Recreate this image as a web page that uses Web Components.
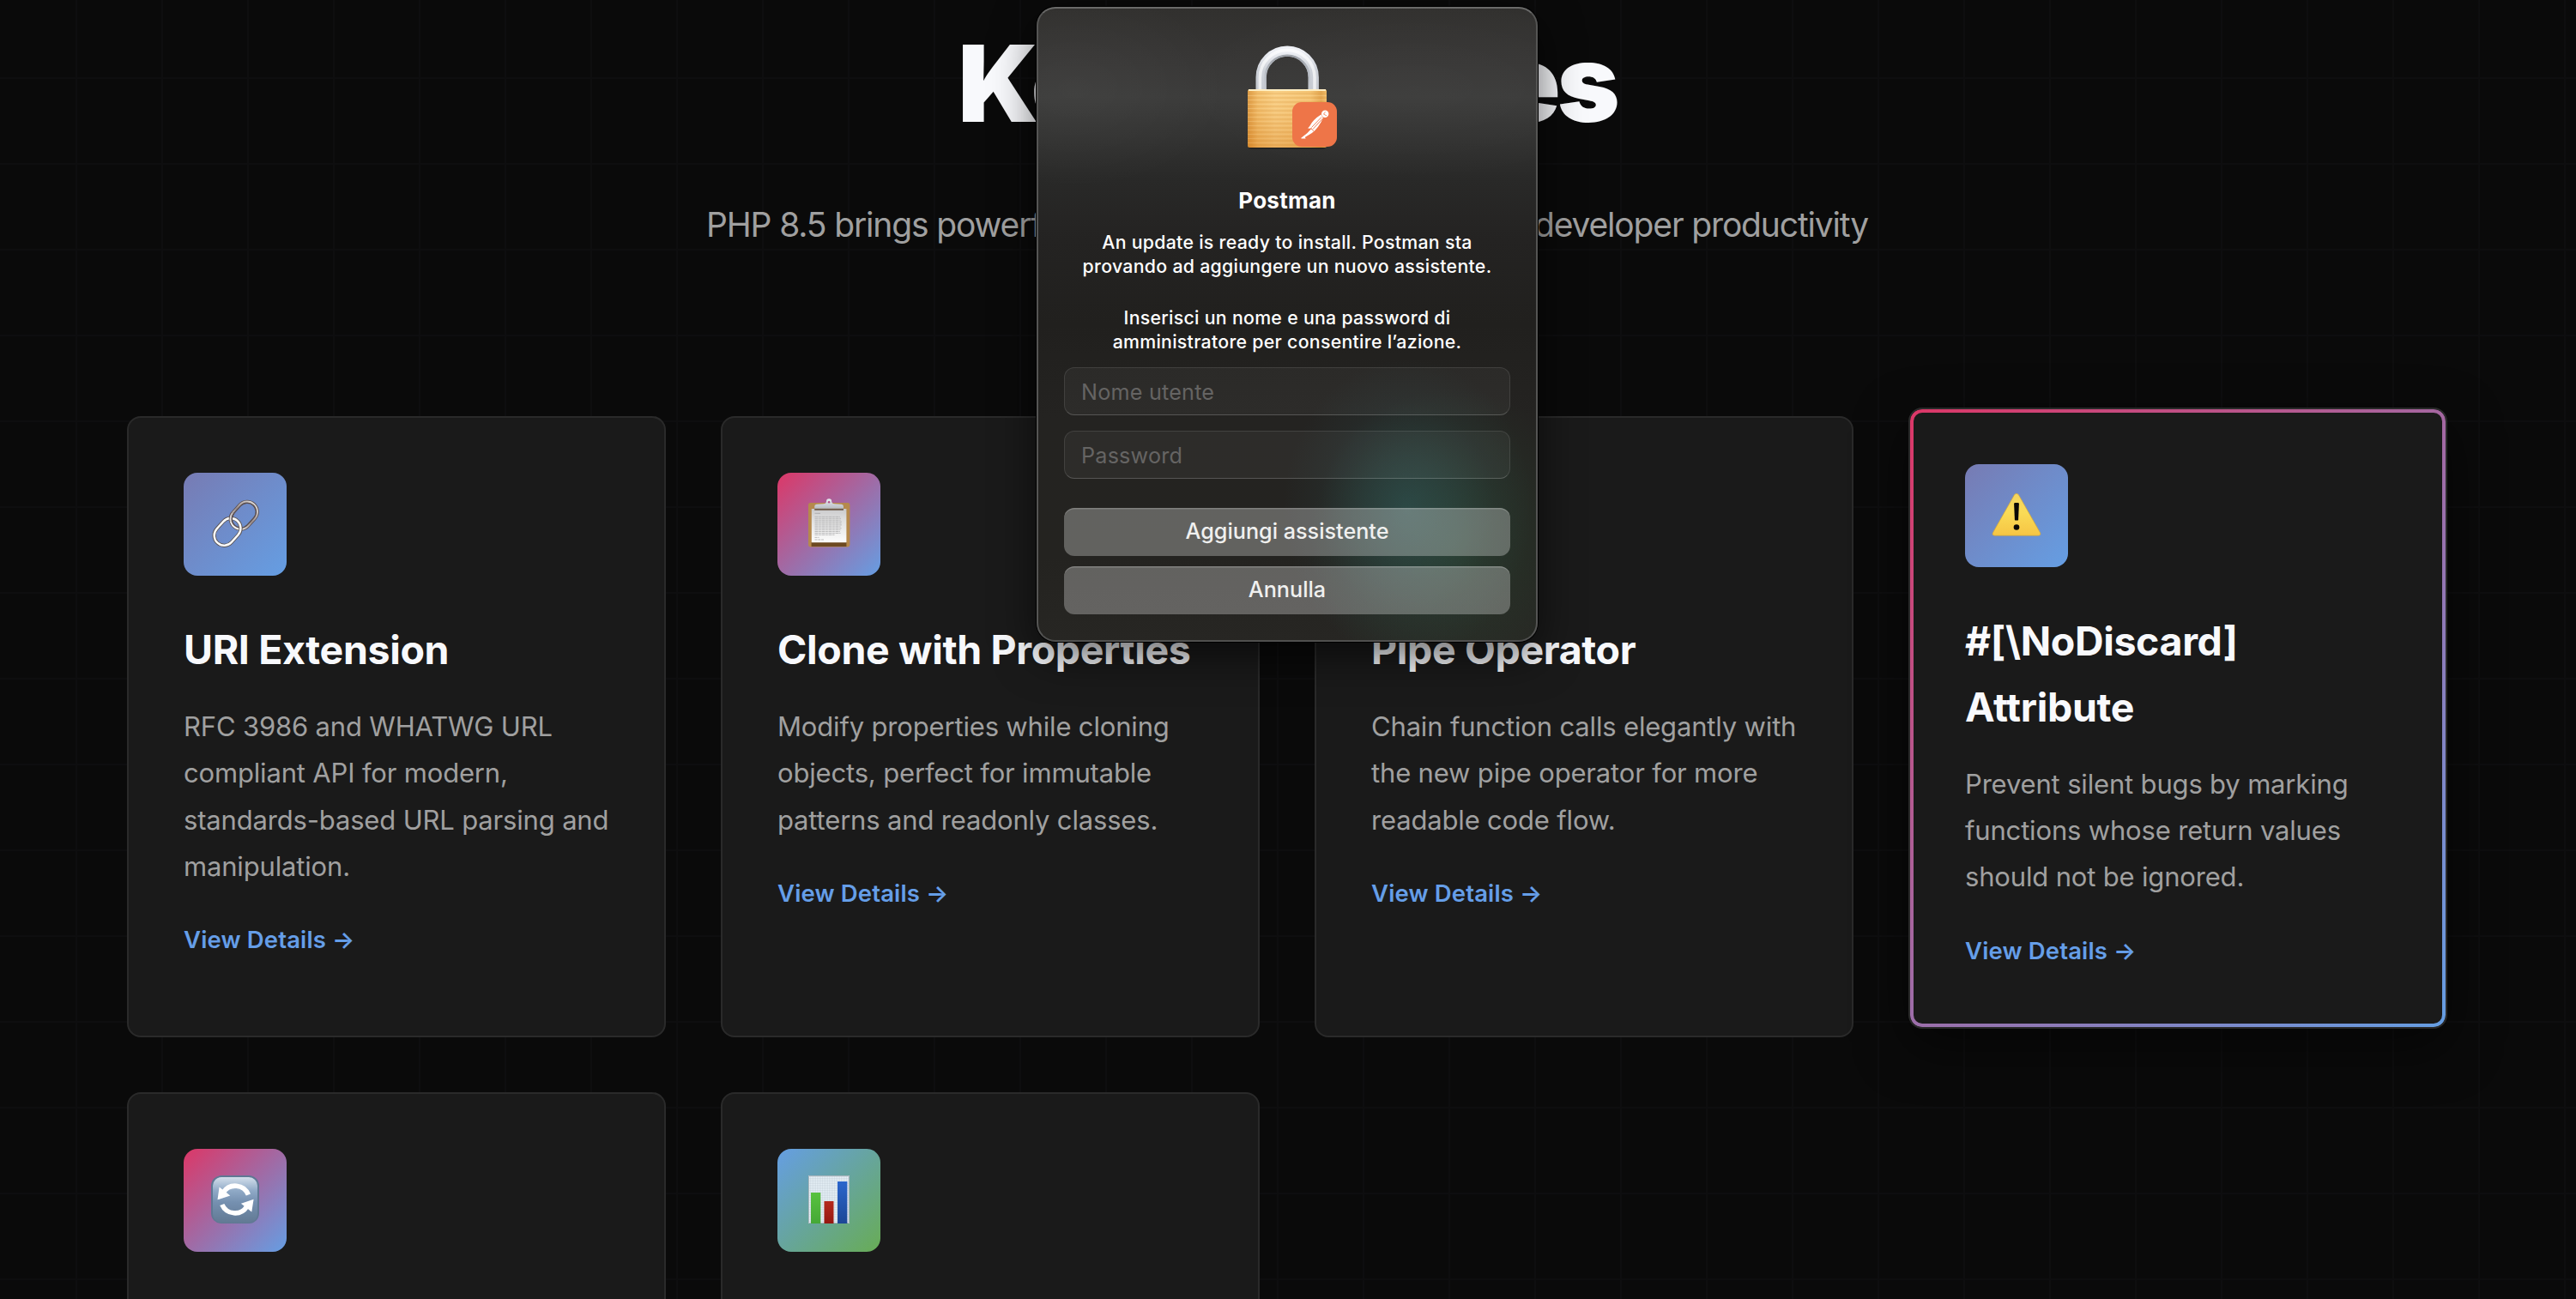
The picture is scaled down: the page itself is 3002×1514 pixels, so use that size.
<!DOCTYPE html>
<html lang="en">
<head>
<meta charset="utf-8">
<title>PHP 8.5 Key Features</title>
<style>
  html, body { margin: 0; height: 1514px; overflow: hidden; background: #0a0a0a; }
  body { font-family: Inter, "Liberation Sans", sans-serif; }
</style>
</head>
<body>
<feature-page>
  <section-header slot="header">
    <span slot="title">Key Features</span>
    <span slot="lead">PHP 8.5 brings powerf</span>
    <span slot="tail">developer productivity</span>
  </section-header>
  <feature-card tone="violet" icon="link">
    <span slot="title">URI Extension</span>
    RFC 3986 and WHATWG URL<br>compliant API for modern,<br>standards-based URL parsing and<br>manipulation.
  </feature-card>
  <feature-card tone="rose" icon="clipboard">
    <span slot="title">Clone with Properties</span>
    Modify properties while cloning<br>objects, perfect for immutable<br>patterns and readonly classes.
  </feature-card>
  <feature-card tone="violet" icon="pipe">
    <span slot="title">Pipe Operator</span>
    Chain function calls elegantly with<br>the new pipe operator for more<br>readable code flow.
  </feature-card>
  <feature-card tone="violet" icon="warning" active>
    <span slot="title">#[\NoDiscard]<br>Attribute</span>
    Prevent silent bugs by marking<br>functions whose return values<br>should not be ignored.
  </feature-card>
  <feature-card tone="rose" icon="refresh" bare></feature-card>
  <feature-card tone="green" icon="chart" bare></feature-card>
  <auth-dialog slot="dialog">
    <span slot="title">Postman</span>
    <span slot="message">An update is ready to install. Postman sta<br>provando ad aggiungere un nuovo assistente.</span>
    <span slot="prompt">Inserisci un nome e una password di<br>amministratore per consentire l’azione.</span>
    <dialog-field slot="fields">Nome utente</dialog-field>
    <dialog-field slot="fields">Password</dialog-field>
    <dialog-button slot="actions">Aggiungi assistente</dialog-button>
    <dialog-button slot="actions">Annulla</dialog-button>
  </auth-dialog>
</feature-page>

<script>
const define = (name, html) => customElements.define(name, class extends HTMLElement {
  constructor() {
    super();
    this.attachShadow({ mode: 'open' }).innerHTML = html;
  }
});

const ICONS = {
  link: `
    <defs>
      <linearGradient id="up" x1="0" y1="0" x2="0" y2="1"><stop offset="0" stop-color="#d8d4d2"/><stop offset=".5" stop-color="#9a8d8c"/><stop offset="1" stop-color="#f4f4f4"/></linearGradient>
      <clipPath id="over"><circle cx="54" cy="51" r="5.5"/></clipPath>
      <g id="upper" fill="none" transform="rotate(42 70.3 49.7)">
        <rect x="58.6" y="32.4" width="23.4" height="34.6" rx="11.7" stroke="#5a4e4f" stroke-width="4.2"/>
        <rect x="58.3" y="32.1" width="24" height="35.2" rx="12" stroke="url(#up)" stroke-width="2"/>
      </g>
    </defs>
    <use href="#upper"/>
    <g fill="none" transform="rotate(42 51 68.8)">
      <rect x="39.4" y="51.4" width="23.4" height="34.8" rx="11.7" stroke="#5c5656" stroke-width="4.2"/>
      <rect x="39.5" y="51.5" width="23.2" height="34.6" rx="11.6" stroke="#fafafa" stroke-width="2.4"/>
    </g>
    <use href="#upper" clip-path="url(#over)"/>`,
  clipboard: `
    <defs>
      <linearGradient id="pp" x1="0" y1="0" x2="0" y2="1"><stop offset="0" stop-color="#c9c9cb"/><stop offset=".3" stop-color="#dedede"/><stop offset="1" stop-color="#fdfdfd"/></linearGradient>
      <linearGradient id="cl" x1="0" y1="0" x2="0" y2="1"><stop offset="0" stop-color="#e9eef2"/><stop offset="1" stop-color="#b7bcc2"/></linearGradient>
    </defs>
    <rect x="36" y="35" width="48.4" height="51.4" rx="2.4" fill="#b5894c"/>
    <path d="M39.6 81h40.8v5H39.6z" fill="#6d4a22"/>
    <path d="M39.8 42h40.6v39.2H39.8z" fill="url(#pp)"/>
    <g stroke="#b4b4b6" stroke-width=".9">
      <path d="M43.5 47.4h6.5" stroke-width="1.2"/>
      <path d="M43.5 51.4h29.5M43.5 53.3h30.5M43.5 55.2h30M43.5 57.1h32M43.5 59h31M43.5 60.9h32M43.5 62.8h30M43.5 64.7h31M43.5 66.6h30M43.5 68.5h29.5M43.5 70.4h30M43.5 72.3h23" stroke-dasharray="4 .7 2.6 .7"/>
      <path d="M43.5 75.4h5M43.5 78h10.5" stroke-dasharray="3 .8"/>
    </g>
    <path d="M43.2 41.4h33.8v2.3H43.2z" fill="#6e5a48"/>
    <path d="M43.2 41.8v-2.6q0-2.2 2.4-2.4l8-.6q3.2-.4 3.4-2.8a3.1 3.1 0 0 1 6.2 0q.2 2.4 3.4 2.8l8 .6q2.4.2 2.4 2.4v2.6z" fill="url(#cl)"/>
    <circle cx="60.1" cy="34.2" r="1.2" fill="#b34e86"/>`,
  warning: `
    <defs><linearGradient id="wy" x1="0" y1="0" x2="0" y2="1"><stop offset="0" stop-color="#f4d560"/><stop offset=".45" stop-color="#fadb56"/><stop offset="1" stop-color="#f6c544"/></linearGradient></defs>
    <path d="M57.6 35.5Q60 32.8 62.3 35.5L87.5 79.8Q88.9 83 85.5 83.2H34.5Q31 83 32.5 79.8Z" fill="url(#wy)" stroke="#d3a63a" stroke-width=".7"/>
    <path d="M57.1 46.2q0-1.3 1.3-1.3h3.2q1.3 0 1.3 1.3L62.1 64.4q-.1 1.2-1.2 1.2h-1.8q-1.1 0-1.2-1.2z" fill="#0a0805"/>
    <circle cx="60" cy="73.5" r="3.3" fill="#0a0805"/>`,
  refresh: `
    <defs><linearGradient id="rb" x1="0" y1="0" x2="0" y2="1"><stop offset="0" stop-color="#d3dfeb"/><stop offset=".3" stop-color="#8fa9c6"/><stop offset=".55" stop-color="#7590b0"/><stop offset="1" stop-color="#627a94"/></linearGradient></defs>
    <rect x="32" y="31" width="56" height="56" rx="12" fill="#5f7894"/>
    <rect x="34" y="33" width="52" height="53" rx="10" fill="url(#rb)"/>
    <g fill="none" stroke="#fff" stroke-width="5.6">
      <path d="M75.4 53.5A16.4 16.4 0 0 0 46.3 50.8"/>
      <path d="M44.8 65A16.4 16.4 0 0 0 73.7 67.2"/>
    </g>
    <path d="M41.6 44.5L54.3 54.6 39.5 59.3Z" fill="#fff"/>
    <path d="M81.6 58.8L66.9 63.7 79.3 73.5Z" fill="#fff"/>`,
  chart: `
    <defs>
      <pattern id="gp" width="2" height="2" patternUnits="userSpaceOnUse"><path d="M0 0h2M0 0v2" stroke="#b9c5cd" stroke-width=".7"/></pattern>
      <linearGradient id="gr" x1="0" y1="0" x2="0" y2="1"><stop offset="0" stop-color="#58c23f"/><stop offset="1" stop-color="#45a836"/></linearGradient>
      <linearGradient id="rd" x1="0" y1="0" x2="0" y2="1"><stop offset="0" stop-color="#b5291d"/><stop offset="1" stop-color="#951811"/></linearGradient>
      <linearGradient id="bl" x1="0" y1="0" x2="0" y2="1"><stop offset="0" stop-color="#2b66cc"/><stop offset="1" stop-color="#1c4796"/></linearGradient>
    </defs>
    <path d="M36 31h48v56H36z" fill="#e8f2f9"/>
    <path d="M36 31h48v56H36z" fill="url(#gp)"/>
    <path d="M36.5 31.5h47v55h-47z" fill="none" stroke="#aab6bd"/>
    <path d="M39 51h11.3v36H39z" fill="url(#gr)"/>
    <path d="M54.5 61h11v26h-11z" fill="url(#rd)"/>
    <path d="M70 38h11.4v49H70z" fill="url(#bl)"/>`,
  pipe: `<path d="M36 48h26v-12l22 24-22 24V72H36z" fill="#3f7fc4"/>`
};

class FeatureCard extends HTMLElement {
  connectedCallback() {
    const body = this.hasAttribute('bare') ? '' : `
      <h3><slot name="title"></slot></h3>
      <p><slot></slot></p>
      <a>View Details →</a>`;
    this.attachShadow({ mode: 'open' }).innerHTML = `
      <style>
        :host { display: block; box-sizing: border-box; padding: 64px; border: 2px solid #2a2a2a;
          border-radius: 16px; background: #1a1a1a; overflow: hidden; }
        :host([active]) { padding: 0; border-color: #292929; transform: translateY(-10px); background: #1a1a1a;
          box-shadow: 0 20px 60px rgba(0,0,0,.5); }
        .frame { display: flex; flex-direction: column; align-items: flex-start; }
        :host([active]) .frame { box-sizing: border-box; height: 720px; padding: 60px; border: 4px solid transparent;
          border-radius: 14px; background: linear-gradient(#1a1a1a, #1a1a1a) padding-box,
          linear-gradient(135deg, #dc3767, #659ee3) border-box; }
        .icon { width: 120px; height: 120px; border-radius: 16px; flex: none; }
        :host([tone=violet]) .icon { background: linear-gradient(135deg, #777bb3, #659ee3); }
        :host([tone=rose]) .icon { background: linear-gradient(135deg, #dc3767, #659ee3); }
        :host([tone=green]) .icon { background: linear-gradient(135deg, #659ee3, #68ac55); }
        svg { display: block; }
        h3 { margin: 48px 0 24px; font: 700 46.5px/76.8px Inter, sans-serif; letter-spacing: -.36px; color: #f8f9fc; white-space: nowrap; }
        p { margin: 0; font: 400 31px/54.4px Inter, sans-serif; letter-spacing: -.17px; color: #a0a0a0; white-space: nowrap; }
        a { margin-top: 33px; font: 600 27.5px/51.2px Inter, sans-serif; letter-spacing: .14px; color: #659ee8; }
      </style>
      <div class="frame">
        <div class="icon"><svg width="120" height="120" viewBox="0 0 120 120">${ICONS[this.getAttribute('icon')]}</svg></div>
        ${body}
      </div>`;
  }
}
customElements.define('feature-card', FeatureCard);

define('section-header', `
  <style>
    :host { display: block; text-align: center; white-space: nowrap; }
    h2 { margin: 0 0 56px; font: 900 124px/150px Inter, sans-serif; letter-spacing: -3.9px; color: #f8f9fc; }
    p { box-sizing: border-box; width: 1354px; margin: 0 auto; display: flex; justify-content: space-between; font: 400 39px/68px Inter, sans-serif; letter-spacing: -1.15px; color: #a0a0a0; }
  </style>
  <h2><slot name="title"></slot></h2>
  <p><slot name="lead"></slot><slot name="tail"></slot></p>`);

define('feature-page', `
  <style>
    :host { display: block; position: relative; box-sizing: border-box; width: 3002px; height: 1514px; padding: 22px 150px 0 148px; overflow: hidden;
      background:
        linear-gradient(90deg, #0e0e0f 2px, transparent 2px) 88px 0 / 100px 100px,
        linear-gradient(#0e0e0f 2px, transparent 2px) 0 90px / 100px 100px,
        #0a0a0a; }
    .grid { margin-top: 189px; display: grid; grid-template-columns: repeat(4, 628px); grid-auto-rows: 724px; gap: 64px; }
    .overlay { position: absolute; left: 1208px; top: 8px; }
  </style>
  <slot name="header"></slot>
  <div class="grid"><slot></slot></div>
  <div class="overlay"><slot name="dialog"></slot></div>`);

define('dialog-field', `
  <style>
    :host { display: flex; align-items: center; box-sizing: border-box; height: 56px; padding: 1px 19px 0; border: 1px solid rgba(255,255,255,.1);
      border-bottom: 1.5px solid rgba(255,255,255,.2); border-radius: 12px; background: rgba(255,255,255,.045);
      font: 400 25.2px/30px Inter, sans-serif; letter-spacing: .2px; color: #656463; }
  </style><slot></slot>`);

define('dialog-button', `
  <style>
    :host { display: flex; align-items: center; justify-content: center; box-sizing: border-box; height: 56px; padding-bottom: 2px; border-radius: 12px;
      background: rgba(255,255,255,.285); box-shadow: inset 0 2px 0 -.5px rgba(255,255,255,.2);
      font: 500 25.2px/30px Inter, sans-serif; color: #f0f0ef; }
  </style><slot></slot>`);

define('auth-dialog', `
  <style>
    :host { display: flex; flex-direction: column; box-sizing: border-box; width: 584px; height: 740px; padding: 38px 30px 30px;
      border: 2px solid; border-color: #6a6a69 #555554 #50504f; border-radius: 22px; color: #fff; text-align: center; white-space: nowrap;
      background:
        radial-gradient(145px 175px at 432px 585px, rgba(50,98,100,.5), rgba(50,96,98,.32) 35%, rgba(50,94,96,.1) 70%, rgba(50,94,96,0)),
        radial-gradient(165px 180px at 485px 625px, rgba(48,90,55,.38), rgba(48,90,60,.2) 45%, rgba(48,90,60,0)),
        radial-gradient(180px 120px at 45px 95px, rgba(255,255,255,.03), transparent),
        radial-gradient(280px 110px at 440px 95px, rgba(255,255,255,.025), transparent),
        linear-gradient(#31302e 0, #373635 60px, #3b3b3a 105px, #333332 150px, #292928 200px, #242322 270px, #21201e 370px, #242321 480px, #242320 640px, #272623 740px);
      background-origin: border-box;
      box-shadow: 0 0 0 1px #000, 0 16px 50px rgba(0,0,0,.6); }
    svg { display: block; align-self: center; }
    h4 { margin: 40px 0 16px; font: 700 26px/36px Inter, sans-serif; letter-spacing: .25px; }
    p { margin: 0 0 32px; font: 500 21.3px/28px Inter, sans-serif; letter-spacing: .29px; }
    .fields { display: flex; flex-direction: column; gap: 18px; margin: -16px 0 34px; text-align: left; }
    .actions { display: flex; flex-direction: column; gap: 12px; }
  </style>
  <svg width="130" height="128" viewBox="0 0 130 128">
    <defs>
      <linearGradient id="gold" x1="0" x2="1" y1="0" y2="0"><stop offset="0" stop-color="#d08a31"/><stop offset=".05" stop-color="#e09a3f"/><stop offset=".13" stop-color="#f0b862"/><stop offset=".35" stop-color="#f8cc80"/><stop offset=".8" stop-color="#f2bd68"/><stop offset=".93" stop-color="#dc983d"/><stop offset="1" stop-color="#eeb55d"/></linearGradient>
      <linearGradient id="deep" x1="0" x2="0" y1="0" y2="1"><stop offset="0" stop-color="#ffe0a0" stop-opacity=".2"/><stop offset="1" stop-color="#d9862b" stop-opacity=".42"/></linearGradient>
      <pattern id="brush" width="92" height="5" patternUnits="userSpaceOnUse"><path d="M0 1h92" stroke="#c9842c" stroke-width="1" opacity=".4"/><path d="M0 3.5h92" stroke="#ffe3ab" stroke-width="1" opacity=".3"/></pattern>
      <linearGradient id="steel" x1="0" x2="0" y1="0" y2="1"><stop offset="0" stop-color="#eef0f5"/><stop offset=".5" stop-color="#cdd1d8"/><stop offset="1" stop-color="#c6cad1"/></linearGradient>
      <linearGradient id="inner" x1="0" x2="0" y1="0" y2="1"><stop offset="0" stop-color="#8b9097"/><stop offset=".5" stop-color="#b3b8c0"/><stop offset="1" stop-color="#c5c9d0"/></linearGradient>
    </defs>
    <rect x="20" y="118" width="90" height="7.5" rx="3" fill="#000" opacity=".35"/>
    <path d="M34.6 57V42.200a30.600 30.600 0 0 1 61.200 0V57" fill="none" stroke="url(#steel)" stroke-width="12.2"/>
    <path d="M39.6 57V42.200a25.600 25.600 0 0 1 51.200 0V57" fill="none" stroke="url(#inner)" stroke-width="2.4" opacity=".8"/>
    <path d="M33.4 57V42.200a31.800 31.800 0 0 1 63.600 0V57" fill="none" stroke="#fff" stroke-width="3.6" opacity=".65"/>
    <rect x="19" y="56" width="92" height="68" rx="2.5" fill="url(#gold)"/>
    <rect x="19" y="60" width="92" height="62" fill="url(#brush)"/>
    <rect x="19" y="56" width="92" height="68" rx="2.5" fill="url(#deep)"/>
    <path d="M20 57h90" stroke="#ffeec4" stroke-width="1.8"/>
    <rect x="71" y="71" width="52" height="52" rx="11" fill="#ee7548"/>
    <circle cx="109.2" cy="84.8" r="4.2" fill="#fff"/>
    <path d="M109.5 82.5l-2 2.6 3.6 1.8" fill="none" stroke="#ee7548" stroke-width=".8"/>
    <path d="M104.5 85.6q-9.5 6-13.2 13.4l-2.2 2.4 2.6.4 2.3-.5-6 6.2-6.7 5.2.2.9h5.2l-1-1.5 8.200-5.200q7.500-5 13-17.300z" fill="#fff"/>
    <path d="M105 88.5L93.500 100.500M106.500 90L95 102.500M92.500 101.500l3.500 3.200" stroke="#ee7548" stroke-width=".9" fill="none"/>
  </svg>
  <h4><slot name="title"></slot></h4>
  <p><slot name="message"></slot></p>
  <p><slot name="prompt"></slot></p>
  <div class="fields"><slot name="fields"></slot></div>
  <div class="actions"><slot name="actions"></slot></div>`);
</script>
</body>
</html>
